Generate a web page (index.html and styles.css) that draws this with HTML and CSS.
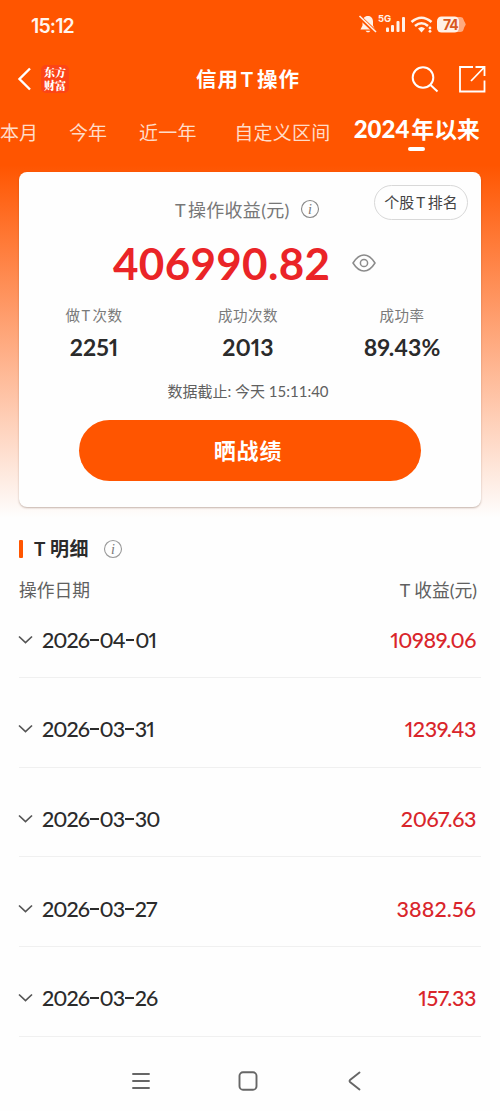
FILE: index.html
```html
<!DOCTYPE html>
<html lang="zh-CN">
<head>
<meta charset="utf-8">
<meta name="viewport" content="width=device-width">
<title>信用T操作</title>
<link rel="stylesheet" href="styles.css">
</head>
<body>
<div class="screen">
  <header class="status">
    <span class="clock">15:12</span>
    <svg class="status-icons" width="110" height="24" viewBox="0 0 110 24">
      <g fill="#fff1e8">
        <path d="M10 3c3.300 0 5 2.500 5 5.500v4l2 4H2.500l2-4v-4C4.500 5.500 6.500 3 10 3zM7.500 17.700h5l-1.500 1.600H9z"/>
        <path d="M1 3.500L17.500 19" stroke="#ff5500" stroke-width="4"/>
        <path d="M1.500 3L18 19" stroke="#fff1e8" stroke-width="1.600"/>
        <rect x="28" y="14.500" width="3" height="4.500" rx="1"/>
        <rect x="33" y="12" width="3" height="7" rx="1"/>
        <rect x="38.500" y="8" width="3" height="11" rx="1"/>
        <rect x="44" y="4" width="3" height="15" rx="1"/>
        <path d="M60 15.500q3.500-3 7 0l-3.500 4z"/>
        <circle cx="72" cy="15" r="1.400"/><circle cx="72" cy="18.300" r="1.400"/>
        <path d="M86 4h16c4 0 3 3 5 5.500q1.500 2 0 3.500c-2 3-1 6-5 6h-16z" opacity=".55"/>
        <rect x="79" y="3.500" width="22" height="16" rx="4.500"/>
      </g>
      <g fill="none" stroke="#fff1e8" stroke-width="2.600">
        <path d="M53.500 9q10-8.500 20 0"/>
        <path d="M57 13q6.500-5.500 13 0"/>
      </g>
      <text class="net" x="20" y="8.500">5G</text>
      <text class="battery" x="85" y="17">74</text>
    </svg>
  </header>

  <nav class="bar">
    <svg class="back" width="15" height="26" viewBox="0 0 15 26"><path d="M13 2.500L2.500 13 13 23.500" fill="none" stroke="#fff" stroke-width="2.400"/></svg>
    <div class="logo"><span>东方</span><span>财富</span></div>
    <h1 class="title">信用<span class="t">T</span>操作</h1>
    <svg class="search" width="28" height="28" viewBox="0 0 28 28" fill="none" stroke="#fff" stroke-width="2"><circle cx="12" cy="12.500" r="10.300"/><path d="M19.500 20l7 6.500"/></svg>
    <svg class="share" width="28" height="28" viewBox="0 0 28 28" fill="none" stroke="#fff" stroke-width="1.800"><path d="M15 2H2v24.500h24.500V15.500M17.500 2h9v9M26.500 2L13 16"/></svg>
  </nav>

  <div class="tabs">
    <span class="tab month">本月</span>
    <span class="tab year">今年</span>
    <span class="tab last">近一年</span>
    <span class="tab custom">自定义区间</span>
    <span class="tab active"><b class="num">2024</b>年以来</span>
  </div>

  <main class="card">
    <div class="card-head">
      <span class="label"><span class="t">T</span>操作收益(元)</span>
      <svg class="info" width="20" height="20" viewBox="0 0 20 20"><circle cx="10" cy="10" r="8.500" fill="none" stroke="#888" stroke-width="1.100"/><text class="info-i" x="10" y="14.800">i</text></svg>
      <span class="rank">个股<span class="t">T</span>排名</span>
    </div>
    <div class="total">
      <span class="amount">406990.82</span>
      <svg class="eye" width="24" height="20" viewBox="0 0 24 20" fill="none" stroke="#8b8b8b" stroke-width="1.500"><path d="M1 10Q6 2 12 2t11 8q-5 8-11 8T1 10z"/><circle cx="12" cy="10" r="3.600"/></svg>
    </div>
    <div class="stats">
      <div class="stat"><span class="stat-name">做<span class="t">T</span>次数</span><span class="stat-value">2251</span></div>
      <div class="stat"><span class="stat-name">成功次数</span><span class="stat-value">2013</span></div>
      <div class="stat"><span class="stat-name">成功率</span><span class="stat-value">89.43%</span></div>
    </div>
    <p class="cutoff">数据截止: 今天 <span class="cut-time">15:11:40</span></p>
    <div class="button">晒战绩</div>
  </main>

  <section class="detail">
    <div class="detail-head">
      <i class="mark"></i>
      <h2 class="detail-title"><span class="t">T</span>明细</h2>
      <svg class="info" width="20" height="20" viewBox="0 0 20 20"><circle cx="10" cy="10" r="8.500" fill="none" stroke="#999" stroke-width="1.100"/><text class="info-i" x="10" y="14.800">i</text></svg>
    </div>
    <div class="columns"><span>操作日期</span><span><span class="t">T</span>收益(元)</span></div>
    <div class="row"><svg class="chev" width="15" height="10" viewBox="0 0 15 10"><path d="M1 1.500l6.500 6 6.500-6"/></svg><span class="date">2026<i class="dash"></i>04<i class="dash"></i>01</span><span class="profit">10989.06</span></div>
    <div class="row"><svg class="chev" width="15" height="10" viewBox="0 0 15 10"><path d="M1 1.500l6.500 6 6.500-6"/></svg><span class="date">2026<i class="dash"></i>03<i class="dash"></i>31</span><span class="profit">1239.43</span></div>
    <div class="row"><svg class="chev" width="15" height="10" viewBox="0 0 15 10"><path d="M1 1.500l6.500 6 6.500-6"/></svg><span class="date">2026<i class="dash"></i>03<i class="dash"></i>30</span><span class="profit">2067.63</span></div>
    <div class="row"><svg class="chev" width="15" height="10" viewBox="0 0 15 10"><path d="M1 1.500l6.500 6 6.500-6"/></svg><span class="date">2026<i class="dash"></i>03<i class="dash"></i>27</span><span class="profit wide">3882.56</span></div>
    <div class="row"><svg class="chev" width="15" height="10" viewBox="0 0 15 10"><path d="M1 1.500l6.500 6 6.500-6"/></svg><span class="date">2026<i class="dash"></i>03<i class="dash"></i>26</span><span class="profit">157.33</span></div>
  </section>

  <footer class="system">
    <svg width="20" height="20" viewBox="0 0 20 20"><path d="M2 3h16M2 10h16M2 17h16"/></svg>
    <svg width="20" height="20" viewBox="0 0 20 20"><rect x="1.500" y="1.300" width="17" height="17.400" rx="3.500"/></svg>
    <svg width="20" height="20" viewBox="0 0 20 20"><path d="M14.500 1.500L5 9q-1 1 0 2l9.500 7.500"/></svg>
  </footer>
</div>
</body>
</html>
```

FILE: styles.css
```css
* { box-sizing: border-box; }
body { margin: 0; background: #fefefe; }
h1, h2, p { margin: 0; }

.screen {
  width: 500px;
  height: 1111px;
  overflow: hidden;
  display: flex;
  flex-direction: column;
  background: linear-gradient(#ff5500 0, #ff5500 165px, #fefefe 518px);
  font-family: Lato, "Noto Sans CJK SC", sans-serif;
  color: #2b2b2b;
  white-space: nowrap;
}
.t { margin: 0 2px 0 1px; }

.status {
  height: 50px;
  padding: 0 32px 0 31px;
  display: flex;
  align-items: center;
  justify-content: space-between;
}
.clock { color: #fff5ee; font: 600 19.500px Inter, sans-serif; letter-spacing: -0.850px; padding-top: 1px; }
.status-icons { margin-top: -1px; }
.net { font: 700 9.500px Inter, sans-serif; fill: #fff1e8; }
.battery { font: 700 14px Inter, sans-serif; fill: #d9581f; letter-spacing: -1px; }

.bar { height: 58px; display: flex; align-items: center; padding: 0 14px 0 17px; color: #fff; }
.logo {
  width: 28px;
  height: 28px;
  margin-left: 9px;
  border-radius: 5px;
  background: #fb4416;
  display: flex;
  flex-direction: column;
  justify-content: center;
  align-items: center;
  font: 900 11px/13px "Noto Serif CJK SC", "Noto Sans CJK SC", serif;
}
.title { width: 105px; margin-left: 127px; font-size: 20.500px; line-height: 30px; font-weight: 700; letter-spacing: 0.900px; }
.title .t { margin: 0 3px 0 2px; }
.search { margin-left: auto; }
.share { margin-left: 19px; }

.tabs { height: 64px; display: flex; align-items: flex-start; padding-top: 8px; }
.tab { color: #ffdcc8; font-size: 19px; line-height: 34px; margin-top: 0; }
.year { margin-left: 31px; }
.last { margin-left: 32px; letter-spacing: 0.200px; }
.custom { margin-left: 37.500px; letter-spacing: 0.300px; }
.active {
  margin: -4px 0 0 23px;
  color: #fff;
  font-size: 22.800px;
  font-weight: 700;
  display: block;
}
.active::after {
  content: "";
  display: block;
  width: 17px;
  height: 4px;
  border-radius: 2px;
  background: #fff;
  margin: 1px auto 0;
}
.num { font-size: 24px; margin-right: 2px; }

.card {
  width: 462px;
  height: 335px;
  margin-left: 19px;
  border-radius: 8px;
  background: #fefefe;
  box-shadow: 0 1px 2px rgba(90, 50, 30, 0.350);
}
.card-head { height: 64px; display: flex; align-items: center; padding: 10px 13px 0 155px; }
.label { font-size: 18px; color: #777; letter-spacing: 0.300px; }
.card-head .info { margin-left: 10.500px; }
.info-i { font: italic 14px "Liberation Serif", serif; fill: #777; text-anchor: middle; }
.rank {
  margin: -14px 0 0 auto;
  width: 94px;
  height: 35px;
  border: 1px solid #d8d8d8;
  border-radius: 18px;
  font-size: 15px;
  line-height: 33px;
  text-align: center;
  color: #444;
}
.rank .t { margin: 0 2.500px 0 2px; }
.total { height: 54px; display: flex; align-items: center; padding-left: 94px; }
.amount { font-size: 44px; line-height: 54px; font-weight: 700; color: #ea2427; letter-spacing: 0.300px; }
.eye { margin-left: 22px; }
.stats { display: grid; grid-template-columns: repeat(3, 1fr); margin: 12px 2px 0 -2px; }
.stat { display: flex; flex-direction: column; align-items: center; }
.stat-name { font-size: 14.500px; line-height: 27px; color: #7a7a7a; letter-spacing: 0.500px; }
.stat-value { font-size: 23px; line-height: 37px; font-weight: 700; font-feature-settings: "pnum"; }
.cutoff { margin-top: 11px; text-align: center; font-size: 15px; line-height: 28px; color: #606060; padding-right: 4px; }
.button {
  width: 342px;
  height: 61px;
  margin: 15px 0 0 60px;
  border-radius: 31px;
  background: #ff5500;
  color: #fff;
  font-size: 22px;
  line-height: 61px;
  font-weight: 700;
  text-align: center;
  letter-spacing: 0.900px;
  padding-right: 4px;
}

.detail { padding: 27px 19px 0; }
.detail-head { height: 30px; display: flex; align-items: center; }
.mark { width: 4px; height: 18px; border-radius: 1px; background: #ff5500; }
.detail-title { margin-left: 10px; font-size: 19px; line-height: 32px; letter-spacing: 0.500px; }
.detail-title .t { margin-right: 4px; }
.detail-head .info { margin-left: 14px; }
.columns {
  height: 38px;
  padding: 12px 4px 0 0;
  display: flex;
  justify-content: space-between;
  font-size: 17.800px;
  line-height: 28px;
  color: #606060;
}
.columns .t { margin-right: 4px; }
.row {
  height: 76px;
  display: flex;
  align-items: center;
  padding-right: 5px;
  border-bottom: 1px solid #f0f0f0;
}
.row + .row { margin-top: 13.700px; }
.chev { fill: none; stroke: #555; stroke-width: 1.700; margin-left: -1px; }
.date, .profit { font-size: 21.500px; line-height: 30px; font-weight: 500; font-feature-settings: "pnum"; letter-spacing: -0.400px; }
.date { margin-left: 9px; letter-spacing: -0.950px; }
.dash { display: inline-block; width: 8.500px; height: 2px; margin: 0 1px; background: #2b2b2b; vertical-align: 7px; }
.profit { margin-left: auto; color: #d9252b; }
.wide { letter-spacing: 0.100px; }

.system { margin-top: 34px; padding-left: 131px; display: flex; gap: 87px; fill: none; stroke: #666; stroke-width: 1.900; stroke-linecap: round; }
.system svg { fill: none; flex: none; }
```
